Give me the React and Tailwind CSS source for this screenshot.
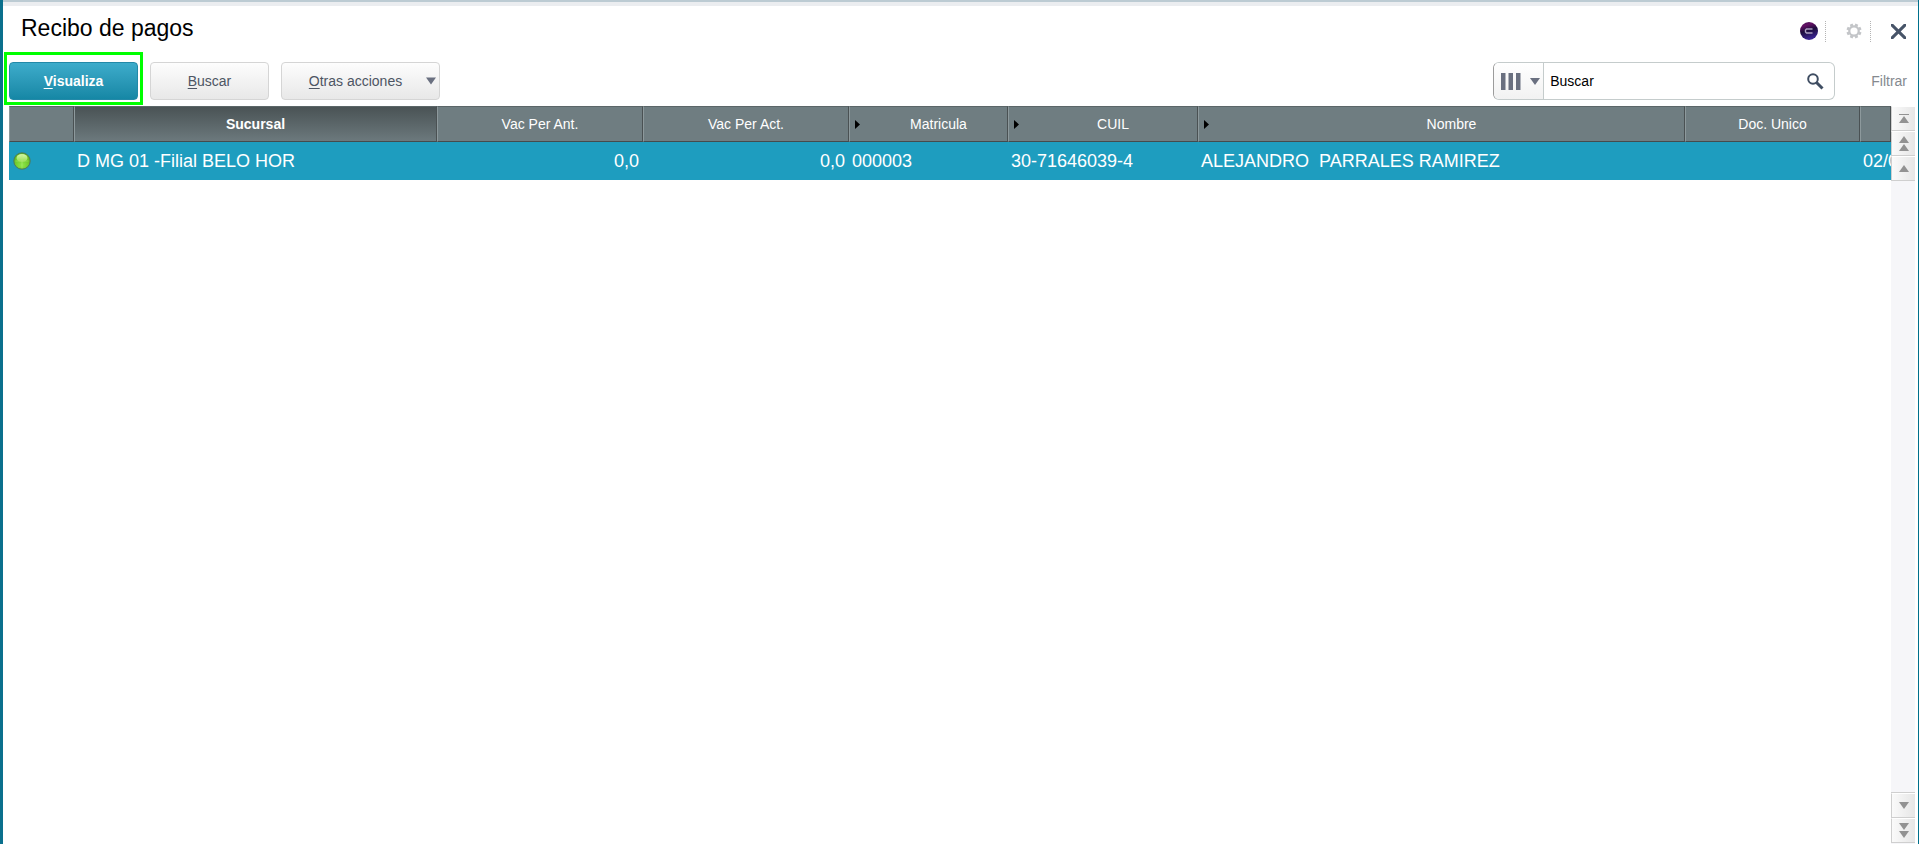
import { X } from 'lucide-react'

const COLUMNS = [
  { label: 'Sucursal', width: 'w-[363px]', value: 'D MG 01 -Filial BELO HOR', active: true },
  { label: 'Vac Per Ant.', width: 'w-[206px]', value: '0,0', numeric: true },
  { label: 'Vac Per Act.', width: 'w-[206px]', value: '0,0', numeric: true },
  { label: 'Matricula', width: 'w-[159px]', value: '000003', indexed: true },
  { label: 'CUIL', width: 'w-[190px]', value: '30-71646039-4', indexed: true },
  { label: 'Nombre', width: '', value: 'ALEJANDRO  PARRALES RAMIREZ', indexed: true },
  { label: 'Doc. Unico', width: 'w-[175px]', value: '' },
  { label: '', width: 'w-[31px]', value: '02/0' },
]

const GEAR_TEETH = [0, 45, 90, 135, 180, 225, 270, 315]

function Triangle({ down, className }) {
  return (
    <svg viewBox="0 0 10 7" className={className || 'h-[7px] w-[10px]'} fill="currentColor" aria-hidden="true">
      {down ? <path d="M0 0h10L5 7z" /> : <path d="M0 7h10L5 0z" />}
    </svg>
  )
}

function ScrollButton({ label, children }) {
  return (
    <button
      aria-label={label}
      className="flex h-[25px] w-full shrink-0 flex-col items-center justify-center gap-px border border-r-0 border-t-white border-b-[#cfcfcf] border-l-[#cfcfcf] bg-linear-to-r from-[#fafafa] to-[#e6e6e6] text-[#929292]"
    >
      {children}
    </button>
  )
}

function ToolbarButton({ hotkey, rest, className, children }) {
  return (
    <button
      className={`flex h-[38px] items-center justify-center rounded-sm border border-[#d5d5d5] bg-linear-to-b from-[#fdfdfd] to-[#e8e8e8] text-[#4d5563] ${className}`}
    >
      <span>
        <span className="underline underline-offset-2">{hotkey}</span>
        {rest}
      </span>
      {children}
    </button>
  )
}

function HeaderCell({ column }) {
  const { label, active, indexed } = column
  return (
    <th
      scope="col"
      className={`h-9 border-t border-r border-b border-l border-t-[#5b6668] border-r-[#4a5153] border-b-[#454b4d] border-l-[#8d999c] p-0 text-sm ${
        active ? 'bg-linear-to-b from-[#4a5355] to-[#6c797d] font-bold' : 'bg-[#6f7d81] font-normal'
      }`}
    >
      <div className="flex items-center">
        {indexed && (
          <svg viewBox="0 0 5 9" className="ml-[5px] h-[9px] w-[5px] fill-black" aria-hidden="true">
            <path d="M0 0 5 4.5 0 9z" />
          </svg>
        )}
        <span className={`flex-1 text-center ${indexed ? 'pl-[10px]' : ''}`}>{label}</span>
      </div>
    </th>
  )
}

function Grid() {
  return (
    <table className="w-full table-fixed border-separate border-spacing-0 text-white">
      <colgroup>
        <col className="w-[65px]" />
        {COLUMNS.map((c, i) => (
          <col key={i} className={c.width} />
        ))}
      </colgroup>
      <thead>
        <tr>
          <HeaderCell column={{ label: '' }} />
          {COLUMNS.map((c, i) => (
            <HeaderCell key={i} column={c} />
          ))}
        </tr>
      </thead>
      <tbody>
        <tr className="bg-[#1e9dbf]">
          <td className="h-[38px] p-0 pl-1">
            <svg viewBox="0 0 18 18" className="size-[18px]" role="img" aria-label="Activo">
              <defs>
                <radialGradient id="led" cx="0.5" cy="0.75" r="0.65">
                  <stop offset="0" stopColor="#8fe84a" />
                  <stop offset="1" stopColor="#5fb81c" />
                </radialGradient>
                <linearGradient id="gloss" x1="0" y1="0" x2="0" y2="1">
                  <stop offset="0" stopColor="#d9f7ae" />
                  <stop offset="1" stopColor="#93dd4c" />
                </linearGradient>
              </defs>
              <circle cx="9" cy="9" r="8.2" fill="url(#led)" stroke="#4d7a5a" />
              <ellipse cx="9" cy="6" rx="5.5" ry="4" fill="url(#gloss)" />
              <path d="M9 2v14M2.5 9h13" stroke="#b4ee7c" strokeWidth="0.8" opacity="0.6" />
            </svg>
          </td>
          {COLUMNS.map((c, i) => (
            <td
              key={i}
              className={`overflow-hidden p-0 text-lg leading-none whitespace-pre ${c.numeric ? 'pr-1 text-right' : 'pl-[3px] text-left'}`}
            >
              {c.value}
            </td>
          ))}
        </tr>
      </tbody>
    </table>
  )
}

function ScrollBar() {
  return (
    <div className="flex w-6 shrink-0 flex-col justify-between bg-[#f6f6f9]">
      <div>
        <ScrollButton label="Primero">
          <span className="h-px w-[10px] bg-current" />
          <Triangle />
        </ScrollButton>
        <ScrollButton label="Página anterior">
          <Triangle />
          <Triangle />
        </ScrollButton>
        <ScrollButton label="Línea anterior">
          <Triangle />
        </ScrollButton>
      </div>
      <div className="border-t border-[#cfcfcf] pb-px">
        <ScrollButton label="Línea siguiente">
          <Triangle down />
        </ScrollButton>
        <ScrollButton label="Página siguiente">
          <Triangle down />
          <Triangle down />
        </ScrollButton>
      </div>
    </div>
  )
}

export default function App() {
  return (
    <div className="flex h-screen flex-col border-r border-l-3 border-r-[#00708c] border-l-[#0b708d] bg-white font-['Liberation_Sans',Arial,sans-serif] text-sm">
      <div className="h-[6px] shrink-0 border-b-4 border-[#ebedf0] bg-[#bccbd3]" />

      <header className="flex h-[50px] shrink-0 items-center justify-between pr-3 pl-[18px]">
        <h1 className="pb-[6px] text-[23px] leading-7 text-black">Recibo de pagos</h1>
        <div className="flex items-center">
          <button aria-label="Asistente">
            <svg viewBox="0 0 18 18" className="size-[18px]" aria-hidden="true">
              <defs>
                <linearGradient id="orb" x1="0" y1="0" x2="0.3" y2="1">
                  <stop offset="0" stopColor="#3c1050" />
                  <stop offset="0.25" stopColor="#641064" />
                  <stop offset="0.55" stopColor="#1d0c3c" />
                  <stop offset="1" stopColor="#3a2490" />
                </linearGradient>
              </defs>
              <circle cx="9" cy="9" r="9" fill="url(#orb)" />
              <path d="M12.5 7H6.5L5.5 8v2l1 1h6" fill="none" stroke="#a99fc0" strokeWidth="1.4" />
            </svg>
          </button>
          <span className="ml-[7px] h-[21px] border-l border-dotted border-[#b4b4b4]" />
          <button aria-label="Configuración" className="ml-5 text-[#c3c5c8]">
            <svg viewBox="0 0 16 16" className="size-4" fill="none" stroke="currentColor" aria-hidden="true">
              <circle cx="8" cy="8" r="4.7" strokeWidth="2.2" />
              {GEAR_TEETH.map((a) => (
                <path key={a} d="M8 0.5v2.5" strokeWidth="3" transform={`rotate(${a + 22.5} 8 8)`} />
              ))}
            </svg>
          </button>
          <span className="ml-2 h-[21px] border-l border-dotted border-[#b4b4b4]" />
          <button aria-label="Cerrar" className="ml-5 text-[#475468]">
            <X className="size-[15px]" viewBox="5 5 14 14" strokeWidth={2.8} />
          </button>
        </div>
      </header>

      <div className="flex h-[50px] shrink-0 items-start justify-between px-[6px] pt-[6px]">
        <div className="flex gap-3">
          <div className="relative">
            <button className="h-[38px] w-[129px] rounded-sm border border-[#2389a8] bg-linear-to-b from-[#3daccb] to-[#1587a5] font-bold text-white">
              <span className="underline underline-offset-2">V</span>isualiza
            </button>
            <span className="pointer-events-none absolute -inset-x-[5px] -top-[10px] -bottom-[5px] border-3 border-[#00ff00]" />
          </div>
          <ToolbarButton hotkey="B" rest="uscar" className="w-[119px]" />
          <ToolbarButton hotkey="O" rest="tras acciones" className="w-[159px] gap-6 pl-6">
            <Triangle down className="h-[8px] w-[10px] text-[#6a7080]" />
          </ToolbarButton>
        </div>

        <div className="flex items-center pr-[5px]">
          <div className="flex h-[38px] w-[342px] overflow-hidden rounded-md border border-[#c5cccc] border-l-[#9c9c9c]">
            <button
              aria-label="Columnas"
              className="flex w-[50px] shrink-0 items-center justify-between border-r border-[#c5cccc] bg-linear-to-b from-white to-[#f2f2f2] pr-[3px] pl-[7px] text-[#6a7080]"
            >
              <svg viewBox="0 0 20 17" className="h-[17px] w-5" fill="currentColor" aria-hidden="true">
                <path d="M0 0h4.500v17H0zM7.500 0h4.500v17H7.500zM15 0h4.500v17H15z" />
              </svg>
              <Triangle down className="h-[7px] w-[10px]" />
            </button>
            <input
              type="text"
              aria-label="Buscar"
              defaultValue="Buscar"
              className="min-w-0 flex-1 px-[6px] text-black outline-none"
            />
            <button aria-label="Ejecutar búsqueda" className="px-[10px] text-[#3f4d62]">
              <svg viewBox="0 0 17 17" className="size-[17px]" fill="none" stroke="currentColor" aria-hidden="true">
                <circle cx="6" cy="6" r="4.8" strokeWidth="2" />
                <path d="M9.500 9.500 15.500 15.500" strokeWidth="3" />
              </svg>
            </button>
          </div>
          <a href="#filtrar" className="ml-9 text-[#85898f]">Filtrar</a>
        </div>
      </div>

      <main className="flex min-h-0 flex-1 pr-[3px] pl-[6px]">
        <div className="min-w-0 flex-1 overflow-hidden">
          <Grid />
        </div>
        <ScrollBar />
      </main>
    </div>
  )
}
